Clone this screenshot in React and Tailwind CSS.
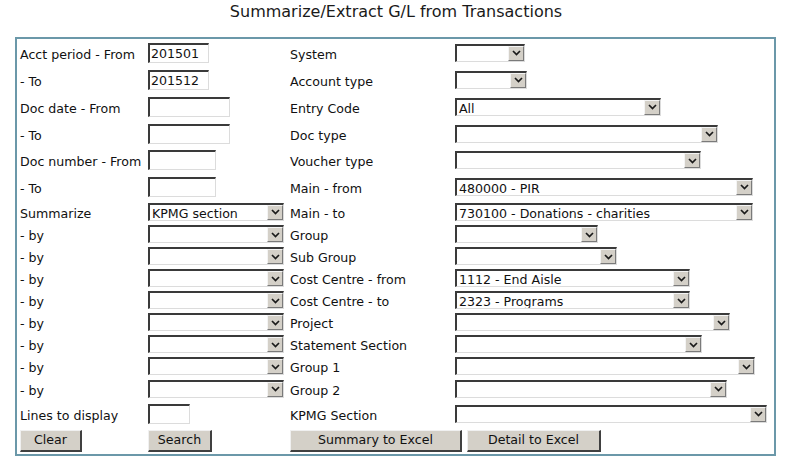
import React from 'react';

const Chevron = () => (
  <svg width="9" height="6" viewBox="0 0 9 6" className="block">
    <polyline points="1,1 4.5,4.5 8,1" fill="none" stroke="#1a1a1a" strokeWidth="1.7" />
  </svg>
);

// old-style inset dropdown
const Select = ({ className = '', value = '' }) => (
  <div className={`flex h-[18px] items-stretch border-t-2 border-l-2 border-r border-b border-t-[#3a3a3a] border-l-[#3a3a3a] border-r-[#dcdcdc] border-b-[#dcdcdc] bg-white ${className}`}>
    <span className="flex-1 overflow-hidden whitespace-nowrap pl-[2px] pt-[1px] text-[12.6px] leading-[16px]">{value}</span>
    <span className="flex w-[16px] items-center justify-center border border-t-[#f4f4f4] border-l-[#f4f4f4] border-r-[#7a7a7a] border-b-[#7a7a7a] bg-[#d4d0c8]">
      <Chevron />
    </span>
  </div>
);

const Input = ({ className = '', value = '' }) => (
  <div className={`h-[20px] border-t-2 border-l-2 border-r border-b border-t-[#3a3a3a] border-l-[#3a3a3a] border-r-[#dcdcdc] border-b-[#dcdcdc] bg-white pl-[1px] text-[12.6px] leading-[18px] ${className}`}>
    {value}
  </div>
);

const Btn = ({ className = '', children }) => (
  <div className={`flex h-[22px] items-center justify-center border-t border-l border-r-2 border-b-2 border-t-[#f0f0f0] border-l-[#f0f0f0] border-r-[#404040] border-b-[#404040] bg-[#d4d0c8] pt-[1px] text-[12.6px] ${className}`}>
    {children}
  </div>
);

const Label = ({ children }) => <span className="pt-[4px] leading-[16px]">{children}</span>;

const Row = ({ h, children }) => (
  <div className={`grid grid-cols-[128px_142px_165px_1fr] items-center ${h}`}>{children}</div>
);

export default function App() {
  return (
    <div className="h-[472px] w-[800px] bg-white font-['DejaVu_Sans',sans-serif] text-[#111]">
      <div className="h-[37px] pr-[8px] pt-[2px] text-center text-[16px] leading-[20px] text-[#1a1a1a]">
        Summarize/Extract G/L from Transactions
      </div>

      <div className="ml-[15px] h-[419px] w-[761px] border-2 border-[#6b98a9] pl-[3px] text-[12.6px]">
        <Row h="h-[27px]">
          <Label>Acct period - From</Label>
          <Input className="w-[61px]" value="201501" />
          <Label>System</Label>
          <Select className="w-[70px]" />
        </Row>
        <Row h="h-[27px]">
          <Label>- To</Label>
          <Input className="w-[61px]" value="201512" />
          <Label>Account type</Label>
          <Select className="w-[72px]" />
        </Row>
        <Row h="h-[27px]">
          <Label>Doc date - From</Label>
          <Input className="w-[82px]" />
          <Label>Entry Code</Label>
          <Select className="w-[206px]" value="All" />
        </Row>
        <Row h="h-[27px]">
          <Label>- To</Label>
          <Input className="w-[82px]" />
          <Label>Doc type</Label>
          <Select className="w-[263px]" />
        </Row>
        <Row h="h-[26px]">
          <Label>Doc number - From</Label>
          <Input className="w-[68px]" />
          <Label>Voucher type</Label>
          <Select className="w-[246px]" />
        </Row>
        <Row h="h-[27px]">
          <Label>- To</Label>
          <Input className="w-[68px]" />
          <Label>Main - from</Label>
          <Select className="w-[298px]" value="480000 - PIR" />
        </Row>
        <Row h="h-[23px]">
          <Label>Summarize</Label>
          <Select className="w-[136px]" value="KPMG section" />
          <Label>Main - to</Label>
          <Select className="w-[298px]" value="730100 - Donations - charities" />
        </Row>
        <Row h="h-[22px]">
          <Label>- by</Label>
          <Select className="w-[136px]" />
          <Label>Group</Label>
          <Select className="w-[143px]" />
        </Row>
        <Row h="h-[22px]">
          <Label>- by</Label>
          <Select className="w-[136px]" />
          <Label>Sub Group</Label>
          <Select className="w-[162px]" />
        </Row>
        <Row h="h-[22px]">
          <Label>- by</Label>
          <Select className="w-[136px]" />
          <Label>Cost Centre - from</Label>
          <Select className="w-[235px]" value="1112 - End Aisle" />
        </Row>
        <Row h="h-[22px]">
          <Label>- by</Label>
          <Select className="w-[136px]" />
          <Label>Cost Centre - to</Label>
          <Select className="w-[235px]" value="2323 - Programs" />
        </Row>
        <Row h="h-[22px]">
          <Label>- by</Label>
          <Select className="w-[136px]" />
          <Label>Project</Label>
          <Select className="w-[275px]" />
        </Row>
        <Row h="h-[22px]">
          <Label>- by</Label>
          <Select className="w-[136px]" />
          <Label>Statement Section</Label>
          <Select className="w-[247px]" />
        </Row>
        <Row h="h-[22px]">
          <Label>- by</Label>
          <Select className="w-[136px]" />
          <Label>Group 1</Label>
          <Select className="w-[300px]" />
        </Row>
        <Row h="h-[23px]">
          <Label>- by</Label>
          <Select className="w-[136px]" />
          <Label>Group 2</Label>
          <Select className="w-[272px]" />
        </Row>
        <Row h="h-[27px]">
          <Label>Lines to display</Label>
          <Input className="w-[42px] h-[19px]" />
          <Label>KPMG Section</Label>
          <Select className="w-[312px]" />
        </Row>
        <Row h="h-[27px]">
          <Btn className="w-[62px]">Clear</Btn>
          <Btn className="w-[64px]">Search</Btn>
          <div className="col-span-2 flex gap-[5px]">
            <Btn className="w-[172px]">Summary to Excel</Btn>
            <Btn className="w-[134px]">Detail to Excel</Btn>
          </div>
        </Row>
      </div>
    </div>
  );
}
